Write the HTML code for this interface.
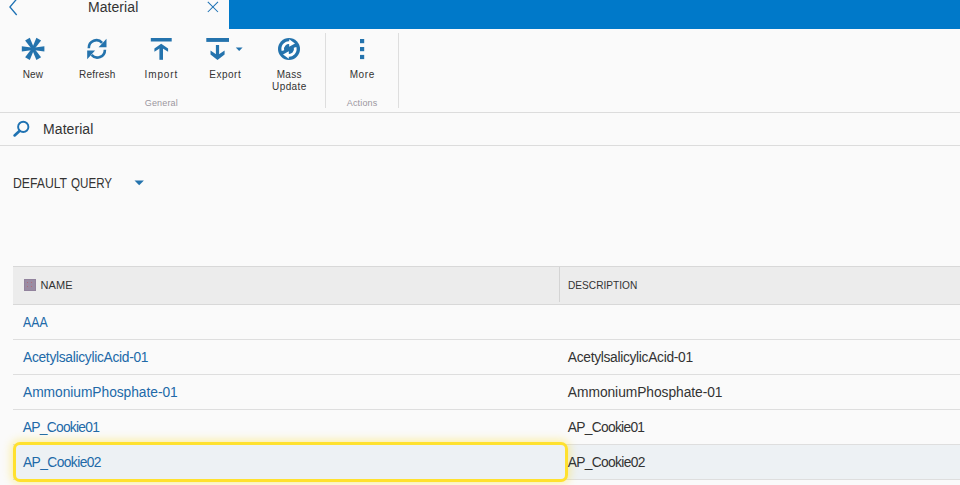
<!DOCTYPE html>
<html><head><meta charset="utf-8"><title>Material</title>
<style>
html,body{margin:0;padding:0;}
body{width:960px;height:485px;overflow:hidden;background:#fafafa;font-family:"Liberation Sans",sans-serif;color:#333;position:relative;}
.abs{position:absolute;white-space:nowrap;}
#topbar{left:229px;top:0;width:731px;height:29px;background:#0079c9;}
.t14{font-size:14px;line-height:16px;}
.lbl{font-size:10px;line-height:12px;color:#333;text-align:center;width:64px;}
.lbl2{font-size:10px;line-height:12px;color:#333;}
.dot{width:1px;height:1px;background:#b06c78;}
.sx{transform-origin:0 0;}
.grp{font-size:9px;line-height:12px;color:#9a96a0;}
.hline{height:1px;background:#dcdcdc;left:0;width:960px;}
.vsep{width:1px;background:#dedede;top:33px;height:75px;}
#thead{left:13px;top:266px;width:947px;height:39px;background:#ececec;border-top:1px solid #d8d8d8;border-bottom:1px solid #d8d8d8;box-sizing:border-box;}
.th{font-size:11px;line-height:12px;color:#333;}
.row{left:13px;width:947px;height:35px;border-bottom:1px solid #dedede;box-sizing:border-box;}
.c1{font-size:13.8px;line-height:16px;color:#2169a8;}
.c2{font-size:13.8px;line-height:16px;color:#333;}
svg{position:absolute;overflow:visible;}
</style></head><body>
<div class="abs" id="topbar"></div>

<div class="abs t14" id="t-tab" style="left:87.96px;top:-1px;letter-spacing:0.071px;">Material</div>

<svg id="icons" style="left:0;top:0" width="960" height="485" viewBox="0 0 960 485">
<g fill="none" stroke="#1d71b4" stroke-width="1.3"><path d="M16.7 -1 L9.9 7 L16.7 15"/><path d="M207.8 1.8 L218 12 M218 1.8 L207.8 12" stroke-width="1.05"/></g>
<g fill="#2473ad" stroke="none">
<!-- new -->
<g transform="translate(33.1 48.9)"><path id="arm" d="M0 -1.2 L11.3 -2.7 L11.3 2.7 L0 1.2 Z"/><path d="M0 -1.2 L11.3 -2.7 L11.3 2.7 L0 1.2 Z" transform="rotate(60)"/><path d="M0 -1.2 L11.3 -2.7 L11.3 2.7 L0 1.2 Z" transform="rotate(120)"/><path d="M0 -1.2 L11.3 -2.7 L11.3 2.7 L0 1.2 Z" transform="rotate(180)"/><path d="M0 -1.2 L11.3 -2.7 L11.3 2.7 L0 1.2 Z" transform="rotate(240)"/><path d="M0 -1.2 L11.3 -2.7 L11.3 2.7 L0 1.2 Z" transform="rotate(300)"/><circle r="2.2"/></g>
<!-- refresh -->
<g transform="translate(86.6 37.6) scale(1 1.03)"><g fill="none" stroke="#2473ad" stroke-width="2.6"><path d="M2.2 10.3 A7.6 7.6 0 0 1 15.5 5.2"/><path d="M18.3 11.7 A7.6 7.6 0 0 1 5.0 16.8"/></g><path d="M19.9 1 V9.4 H12 Z"/><path d="M0.6 21 V12.6 H8.5 Z"/></g>
<!-- import -->
<rect x="150.8" y="38" width="20.9" height="3.5"/><rect x="159.4" y="46" width="3.6" height="13.8"/><path d="M154.4 48.6 L161.2 43.7 L168.1 48.6 V51.8 L161.2 47.6 L154.4 51.8 Z"/>
<!-- export -->
<rect x="206.3" y="38" width="22.7" height="3.9"/><rect x="215.9" y="45" width="3.2" height="12"/><path d="M210.5 50.4 L217.5 55.2 L224.6 50.4 V54.5 L217.5 59.9 L210.5 54.5 Z"/>
<path d="M235.8 47.4 H242.6 L239.2 51 Z"/>
<!-- mass update -->
<circle cx="289" cy="49" r="11"/>
<!-- more -->
<rect x="360" y="39" width="4.2" height="4.2"/><rect x="360" y="47" width="4.2" height="4.2"/><rect x="360" y="54.9" width="4.2" height="4.2"/>
<!-- dropdown -->
<path d="M134.5 180.4 H143.9 L139.2 185.3 Z"/>
</g>
<!-- mass update inner -->
<g transform="translate(289 49)"><g fill="none" stroke="#ffffff" stroke-width="2.6"><path d="M-6.1 1.6 A6.3 6.3 0 0 1 1.6 -6.1"/><path d="M6.1 -1.6 A6.3 6.3 0 0 1 -1.6 6.1"/></g><path d="M0.2 -9.8 L6 -5.6 L0.2 -2.2 Z" fill="#fff"/><path d="M-0.2 9.8 L-6 5.6 L-0.2 2.2 Z" fill="#fff"/><path d="M-4.2 1.8 L-1 -2.8 L0.2 -0.6 L4.2 -1.8 L1 2.8 L-0.2 0.6 Z" fill="#2473ad"/></g>
<!-- search -->
<circle cx="23.25" cy="126.9" r="5.15" fill="none" stroke="#1f72b2" stroke-width="1.9"/><path d="M19.2 131.2 L14.6 135.4" stroke="#1f72b2" stroke-width="2.7" stroke-linecap="round" fill="none"/>
</svg>







<div class="abs lbl2" id="t-new" style="left:22.63px;top:69px;letter-spacing:0.210px;">New</div>
<div class="abs lbl2" id="t-refresh" style="left:79.07px;top:69px;letter-spacing:0.198px;">Refresh</div>
<div class="abs lbl2" id="t-import" style="left:144.44px;top:69px;letter-spacing:0.916px;">Import</div>
<div class="abs lbl2" id="t-export" style="left:209.37px;top:69px;letter-spacing:0.486px;">Export</div>
<div class="abs lbl2" id="t-mass" style="left:276.81px;top:69px;letter-spacing:0.241px;">Mass</div>
<div class="abs lbl2" id="t-update" style="left:272.07px;top:81px;letter-spacing:0.390px;">Update</div>
<div class="abs lbl2" id="t-more" style="left:349.66px;top:69px;letter-spacing:0.591px;">More</div>
<div class="abs grp" id="t-general" style="left:144.82px;top:97px;letter-spacing:0.143px;">General</div>
<div class="abs grp" id="t-actions" style="left:346.82px;top:97px;letter-spacing:0.147px;">Actions</div>
<div class="abs vsep" style="left:325px;"></div>
<div class="abs vsep" style="left:398px;"></div>
<div class="abs hline" style="top:112px;"></div>

<!-- search -->
<div class="abs t14" id="t-smat" style="left:43.12px;top:121px;letter-spacing:0.049px;">Material</div>
<div class="abs hline" style="top:145px;"></div>

<div class="abs t14 sx" id="t-dq1" style="left:12.60px;top:175px;transform:scaleX(0.8726);">DEFAULT</div>
<div class="abs t14 sx" id="t-dq2" style="left:71.28px;top:175px;transform:scaleX(0.8303);">QUERY</div>

<!-- table -->
<div class="abs" id="thead"></div>
<div class="abs" style="left:559px;top:267px;width:1px;height:35px;background:#d4d4d4;"></div>
<div class="abs" style="left:24px;top:279px;width:12px;height:12px;background:#9a8ca3;box-sizing:border-box;border:1px solid #92839d;"></div>
<div class="abs dot" style="left:27px;top:282px;"></div><div class="abs dot" style="left:31px;top:282px;"></div><div class="abs dot" style="left:27px;top:286px;"></div><div class="abs dot" style="left:31px;top:286px;"></div>
<div class="abs th" id="t-name" style="left:40.48px;top:279px;letter-spacing:0.108px;">NAME</div>
<div class="abs th sx" id="t-desc" style="left:568.22px;top:279px;transform:scaleX(0.9212);">DESCRIPTION</div>

<div class="abs row" style="top:305px;"></div>
<div class="abs row" style="top:340px;"></div>
<div class="abs row" style="top:375px;"></div>
<div class="abs row" style="top:410px;"></div>
<div class="abs row" style="top:445px;background:#edf1f4;"></div>

<div class="abs c1 sx" id="t-aaa1" style="left:23.29px;top:315px;transform:scaleX(0.8922);">AAA</div>
<div class="abs c1" id="t-ace1" style="left:23.00px;top:350px;letter-spacing:-0.304px;">AcetylsalicylicAcid-01</div>
<div class="abs c2" id="t-ace2" style="left:567.86px;top:350px;letter-spacing:-0.318px;">AcetylsalicylicAcid-01</div>
<div class="abs c1" id="t-amm1" style="left:23.00px;top:385px;letter-spacing:-0.050px;">AmmoniumPhosphate-01</div>
<div class="abs c2" id="t-amm2" style="left:567.86px;top:385px;letter-spacing:-0.055px;">AmmoniumPhosphate-01</div>
<div class="abs c1" id="t-ap11" style="left:22.86px;top:420px;letter-spacing:-0.737px;">AP_Cookie01</div>
<div class="abs c2" id="t-ap12" style="left:567.85px;top:420px;letter-spacing:-0.720px;">AP_Cookie01</div>
<div class="abs" id="selbox" style="left:13px;top:442px;width:555px;height:39.5px;box-sizing:border-box;border:3px solid #ffe12e;border-radius:7px;box-shadow:0 0 9px 2px rgba(255,225,46,.42);background:#edf1f4;"></div>
<div class="abs c1" id="t-ap21" style="left:23.00px;top:455px;letter-spacing:-0.589px;">AP_Cookie02</div>
<div class="abs c2" id="t-ap22" style="left:567.71px;top:455px;letter-spacing:-0.668px;">AP_Cookie02</div>
</body></html>
